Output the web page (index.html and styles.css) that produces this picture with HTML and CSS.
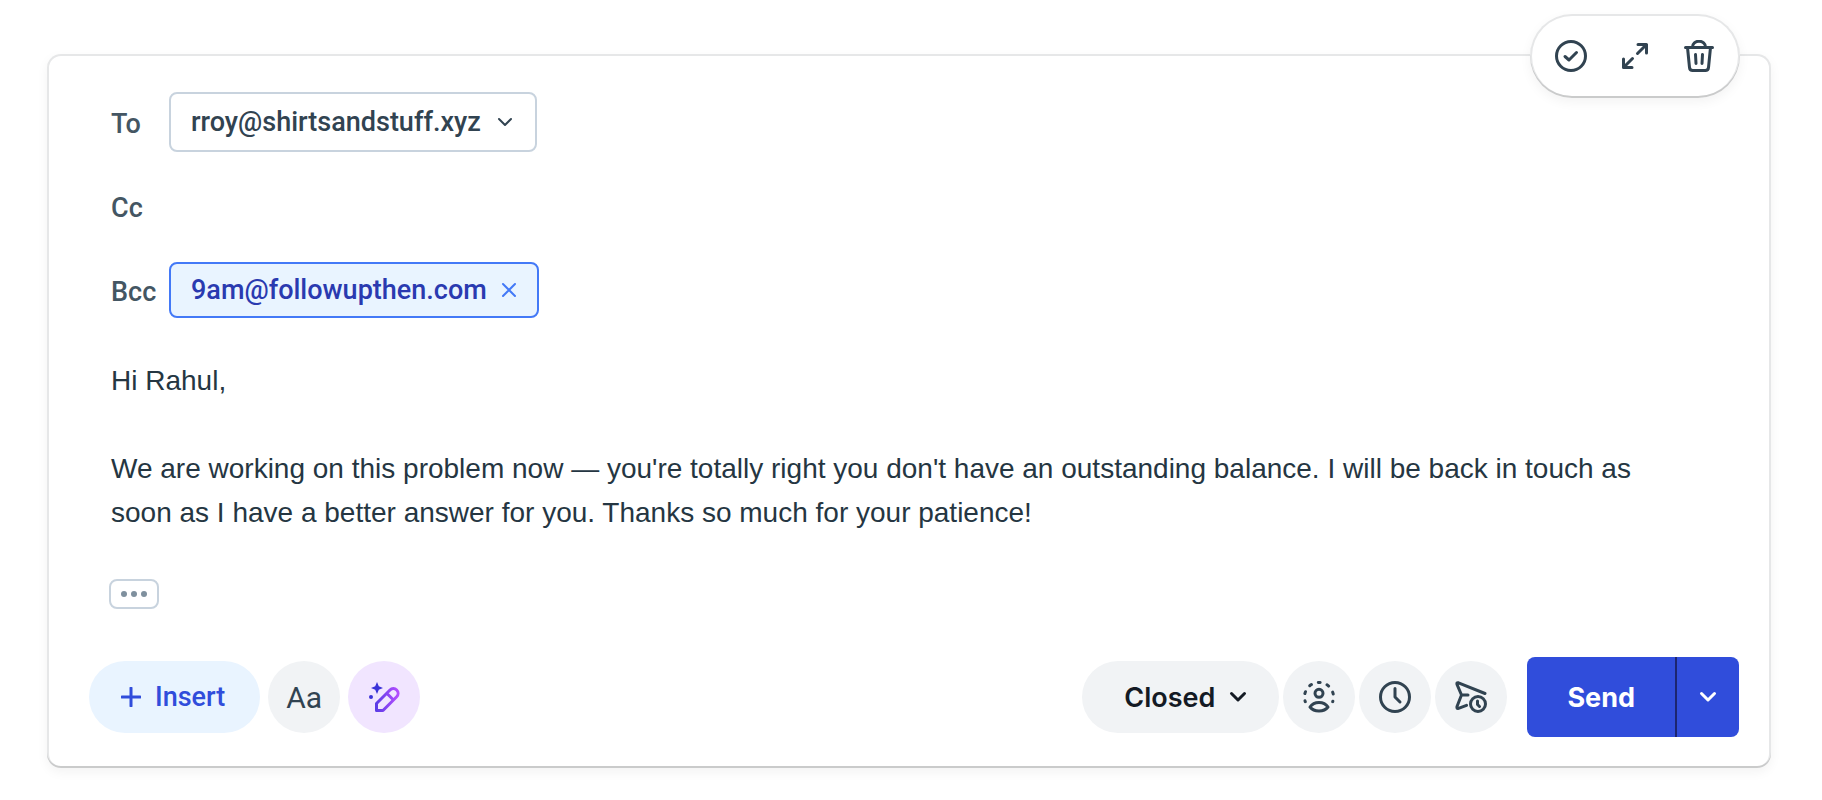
FILE: index.html
```html
<!DOCTYPE html>
<html lang="en">
<head>
    <meta charset="UTF-8">
    <meta name="viewport" content="width=device-width, initial-scale=1.0">
    <title>Reply</title>
    <link rel="stylesheet" href="styles.css">
</head>
<body>
    <main class="composer">
        <div class="quick-actions">
            <button type="button" class="icon-button" aria-label="Mark as done">
                <svg width="32" height="32" viewBox="0 0 32 32">
                    <circle cx="16" cy="16" r="14.5"/>
                    <path d="M10 16.500l4 3.500 7.500-7.500"/>
                </svg>
            </button>
            <button type="button" class="icon-button" aria-label="Expand">
                <svg width="32" height="32" viewBox="0 0 32 32">
                    <path d="M18.500 13.500l9-9M19 4.500h8.500V13M13.500 18.500l-9 9M4.500 19v8.500H13"/>
                </svg>
            </button>
            <button type="button" class="icon-button" aria-label="Delete">
                <svg width="32" height="32" viewBox="0 0 32 32">
                    <path d="M2.500 7.500h27M4.500 7.500l2 20q.3 3 3.200 3h12.600q2.900 0 3.200-3l2-20M9.500 7a6.500 5.800 0 0 1 13 0M12.500 14.500l.5 9M19.500 14.500l-.5 9"/>
                </svg>
            </button>
        </div>

        <div class="fields">
            <div class="field">
                <span class="field-label">To</span>
                <button type="button" class="recipient">
                    rroy@shirtsandstuff.xyz
                    <svg width="16" height="16" viewBox="0 0 16 16"><path d="M2 5l6 6 6-6"/></svg>
                </button>
            </div>
            <div class="field">
                <label class="field-label" for="cc">Cc</label>
                <input type="text" id="cc" class="field-input">
            </div>
            <div class="field">
                <span class="field-label">Bcc</span>
                <span class="chip">
                    9am@followupthen.com
                    <button type="button" class="chip-remove" aria-label="Remove">
                        <svg width="16" height="16" viewBox="0 0 16 16"><path d="M2 2l12 12M14 2L2 14"/></svg>
                    </button>
                </span>
            </div>
        </div>

        <div class="message">
            <p>Hi Rahul,</p>
            <p>We are working on this problem now — you're totally right you don't have an outstanding balance. I will be back in touch as soon as I have a better answer for you. Thanks so much for your patience!</p>
        </div>

        <button type="button" class="show-quoted" aria-label="Show quoted text">
            <svg width="26" height="6" viewBox="0 0 26 6"><circle cx="3" cy="3" r="3"/><circle cx="13" cy="3" r="3"/><circle cx="23" cy="3" r="3"/></svg>
        </button>

        <div class="toolbar">
            <div class="toolbar-left">
                <button type="button" class="pill insert">
                    <svg width="20" height="20" viewBox="0 0 20 20"><path d="M10 1v18M1 10h18"/></svg>
                    Insert
                </button>
                <button type="button" class="round format">Aa</button>
                <button type="button" class="round assist" aria-label="AI assist">
                    <svg width="32" height="32" viewBox="0 0 32 32">
                        <defs>
                            <linearGradient id="pencil" x1="8" y1="16" x2="30" y2="16" gradientUnits="userSpaceOnUse">
                                <stop offset="0" stop-color="#5a3be6"/>
                                <stop offset="1" stop-color="#b44dff"/>
                            </linearGradient>
                        </defs>
                        <path class="spark" d="M9 1l1.800 4.200L15 7l-4.200 1.800L9 13l-1.800-4.200L3 7l4.200-1.800z"/>
                        <circle class="spark" cx="3" cy="16" r="2"/>
                        <path class="pencil" d="M8.500 22.500L22 9a4.700 4.700 0 0 1 6.700 6.700L15 29.500H8.500zM19 12.500l5 5"/>
                    </svg>
                </button>
            </div>
            <div class="toolbar-right">
                <button type="button" class="pill status">
                    Closed
                    <svg width="18" height="18" viewBox="0 0 18 18"><path d="M2.500 5.500L9 12l6.500-6.500"/></svg>
                </button>
                <button type="button" class="round" aria-label="Assign">
                    <svg width="32" height="32" viewBox="0 0 32 32">
                        <path stroke-dasharray="2 7.200" stroke-dashoffset="1" d="M2.300 20.700a14.500 14.500 0 1 1 27.400 0"/>
                        <circle cx="16" cy="12.300" r="4"/>
                        <path d="M7 26C11 20 21 20 25 26 21 31.300 11 31.300 7 26z"/>
                    </svg>
                </button>
                <button type="button" class="round" aria-label="Snooze">
                    <svg width="32" height="32" viewBox="0 0 32 32">
                        <circle cx="16" cy="16" r="14.500"/>
                        <path d="M16 7.500V16l5 5"/>
                    </svg>
                </button>
                <button type="button" class="round" aria-label="Send later">
                    <svg width="32" height="32" viewBox="0 0 32 32">
                        <path d="M30 12.500L3.500 1.800q-2-.6-1.500 1.500L6.500 14 2 25.500q-.5 2.500 1.500 1.800l8-3M6.500 14H13"/>
                        <circle cx="23" cy="23" r="7.500"/>
                        <path d="M22.500 20v3.500l2 2"/>
                    </svg>
                </button>
                <div class="send-group">
                    <button type="button" class="send">Send</button>
                    <button type="button" class="send-more" aria-label="Send options">
                        <svg width="18" height="18" viewBox="0 0 18 18"><path d="M2.500 5.500L9 12l6.500-6.500"/></svg>
                    </button>
                </div>
            </div>
        </div>
    </main>
</body>
</html>
```
FILE: styles.css
```css
* {
    box-sizing: border-box;
}

body {
    margin: 0;
    padding: 54px 51px 31px 47px;
    background: #ffffff;
    color: #253642;
    font-family: Roboto, "Liberation Sans", sans-serif;
}

button {
    margin: 0;
    padding: 0;
    border: none;
    background: none;
    color: inherit;
    font: inherit;
    cursor: pointer;
}

svg {
    display: block;
    flex: none;
    fill: none;
    stroke: currentColor;
    stroke-width: 3;
    stroke-linecap: round;
    stroke-linejoin: round;
}

.composer,
.quick-actions {
    background: #ffffff;
    /* outline, darker along the bottom edge, plus a soft drop */
    box-shadow:
        inset 0 -2px 0 rgba(0, 0, 0, 0.12),
        inset 0 0 0 2px #e6e7e8,
        0 4px 12px rgba(0, 0, 0, 0.05);
}

.composer {
    position: relative;
    padding: 38px 32px 31px 42px;
    border-radius: 14px;
}

.quick-actions {
    position: absolute;
    top: -40px;
    right: 31px;
    display: flex;
    align-items: center;
    gap: 32px;
    height: 84px;
    padding: 0 25px;
    border-radius: 42px;
}

.icon-button {
    color: #314351;
}

.fields {
    padding: 0 22px;
}

.field {
    display: flex;
    align-items: center;
    height: 60px;
    margin-bottom: 24px;
    font-size: 27px;
    font-weight: 500;
}

.field-label {
    width: 58px;
    padding-top: 4px;
    color: #445663;
}

.field-input {
    flex: 1;
    height: 56px;
    padding: 0 20px;
    border: none;
    outline: none;
    font: inherit;
}

.recipient,
.chip {
    display: flex;
    align-items: center;
    border-radius: 8px;
}

.recipient {
    gap: 16px;
    height: 60px;
    padding: 0 22px 0 20px;
    border: 2px solid #c8d3de;
    color: #314351;
}

.chip {
    gap: 14px;
    height: 56px;
    padding: 0 20px;
    background: #e9f4ff;
    border: 2px solid #4379f7;
    color: #2a3ab0;
}

.chip-remove {
    color: #4379f7;
}

.recipient svg,
.chip svg {
    stroke-width: 2;
}

.message {
    padding: 15px 60px 0 22px;
    font-family: "Liberation Sans", Arial, sans-serif;
    font-size: 28px;
    line-height: 44px;
}

.message p {
    margin: 0 0 44px;
}

.show-quoted {
    display: flex;
    align-items: center;
    justify-content: center;
    width: 50px;
    height: 30px;
    margin-left: 20px;
    border: 2px solid #c8d3de;
    border-radius: 8px;
}

.show-quoted svg {
    fill: #7f909e;
    stroke: none;
}

.toolbar {
    display: flex;
    align-items: center;
    justify-content: space-between;
    margin-top: 48px;
}

.toolbar-left,
.toolbar-right {
    display: flex;
    align-items: center;
}

.toolbar-left {
    gap: 8px;
}

.toolbar-right {
    gap: 4px;
}

.pill,
.round {
    display: flex;
    align-items: center;
    justify-content: center;
    height: 72px;
    background: #f1f3f5;
    border-radius: 36px;
}

.round {
    width: 72px;
    color: #314351;
}

.insert {
    gap: 14px;
    padding: 0 35px 0 32px;
    background: #e9f4ff;
    color: #304ddb;
    font-size: 27px;
    font-weight: 500;
}

.format {
    font-size: 30px;
}

.assist {
    background: #f1e5ff;
}

.assist .spark {
    fill: #3a32d8;
    stroke: none;
}

.assist .pencil {
    stroke: url(#pencil);
}

.status {
    gap: 14px;
    padding: 0 32px 0 42px;
    color: #141a24;
    font-family: Inter, Roboto, sans-serif;
    font-size: 27px;
    font-weight: 600;
}

.send-group {
    display: flex;
    height: 80px;
    margin-left: 16px;
    background: #304ddb;
    border-radius: 8px;
    color: #ffffff;
    font-family: Inter, Roboto, sans-serif;
    font-size: 27px;
    font-weight: 700;
}

.send {
    padding: 0 40px;
}

.send-more {
    display: flex;
    align-items: center;
    justify-content: center;
    width: 64px;
    border-left: 2px solid #1c2570;
}
```
